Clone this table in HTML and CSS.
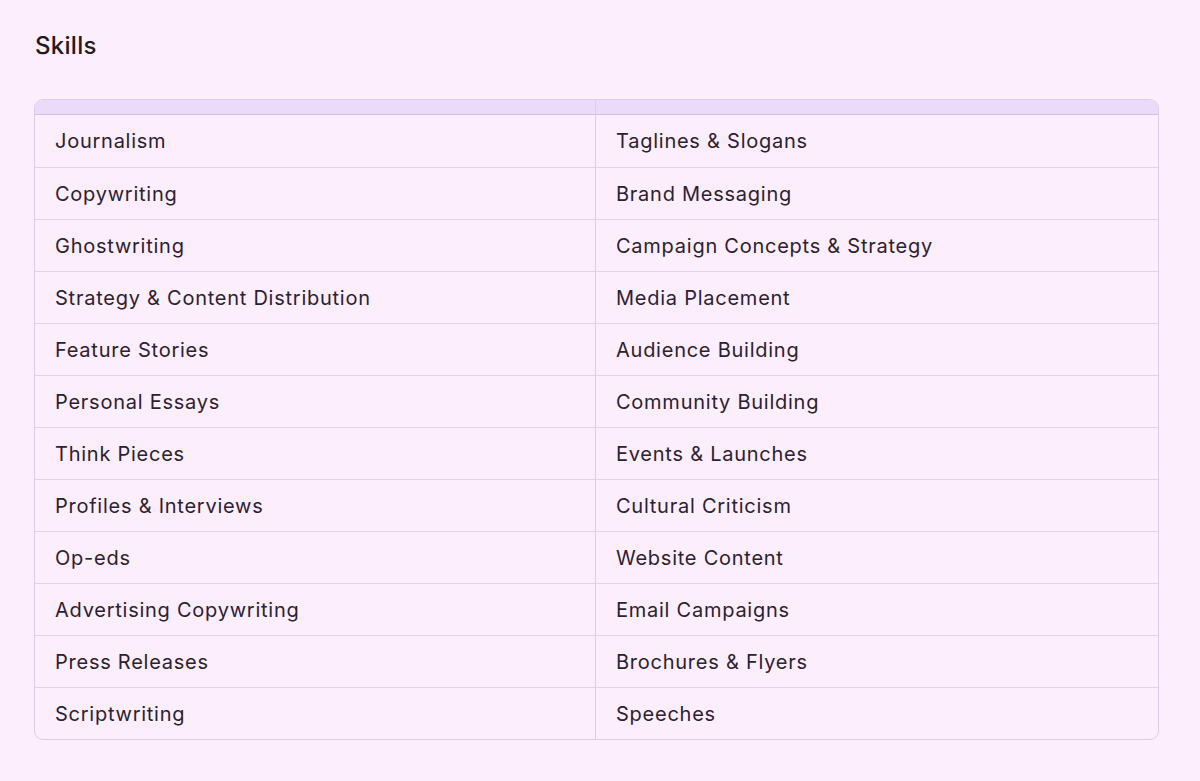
FILE: index.html
```html
<!DOCTYPE html>
<html>
<head>
<meta charset="utf-8">
<link rel="stylesheet" href="styles.css">
</head>
<body>
<div class="page">
  <h2 class="title">Skills</h2>
  <table class="skills">
    <thead>
      <tr><th></th><th></th></tr>
    </thead>
    <tbody>
      <tr><td>Journalism</td><td>Taglines &amp; Slogans</td></tr>
      <tr><td>Copywriting</td><td>Brand Messaging</td></tr>
      <tr><td>Ghostwriting</td><td>Campaign Concepts &amp; Strategy</td></tr>
      <tr><td>Strategy &amp; Content Distribution</td><td>Media Placement</td></tr>
      <tr><td>Feature Stories</td><td>Audience Building</td></tr>
      <tr><td>Personal Essays</td><td>Community Building</td></tr>
      <tr><td>Think Pieces</td><td>Events &amp; Launches</td></tr>
      <tr><td>Profiles &amp; Interviews</td><td>Cultural Criticism</td></tr>
      <tr><td>Op-eds</td><td>Website Content</td></tr>
      <tr><td>Advertising Copywriting</td><td>Email Campaigns</td></tr>
      <tr><td>Press Releases</td><td>Brochures &amp; Flyers</td></tr>
      <tr><td>Scriptwriting</td><td>Speeches</td></tr>
    </tbody>
  </table>
</div>
</body>
</html>
```
FILE: styles.css
```css
html, body {
  margin: 0;
  padding: 0;
  background: #fdeefd;
}
body {
  font-family: Inter, "Noto Sans", sans-serif;
  color: #2a2232;
}
.page {
  padding: 30px 41px 0 34px;
}
.title {
  margin: 0 0 37px 1px;
  font-size: 24px;
  font-weight: 500;
  line-height: 32px;
  letter-spacing: 0.3px;
  color: #1f1a24;
}
.skills {
  width: 1125px;
  border-collapse: separate;
  border-spacing: 0;
  border: 1px solid #dccde6;
  border-radius: 9px;
  overflow: hidden;
  table-layout: fixed;
}
.skills th {
  height: 14px;
  padding: 0;
  background: #ecdaf8;
  border-bottom: 1px solid #d3bfe2;
}
.skills th + th, .skills td + td {
  border-left: 1px solid #dccde6;
}
.skills td {
  height: 52px;
  padding: 0 20px;
  font-size: 20px;
  letter-spacing: 0.75px;
  border-top: 1px solid #e2d3ea;
  box-sizing: border-box;
}
.skills tbody tr:first-child td {
  border-top: none;
}
.skills th:first-child, .skills td:first-child {
  width: 560px;
}
```
